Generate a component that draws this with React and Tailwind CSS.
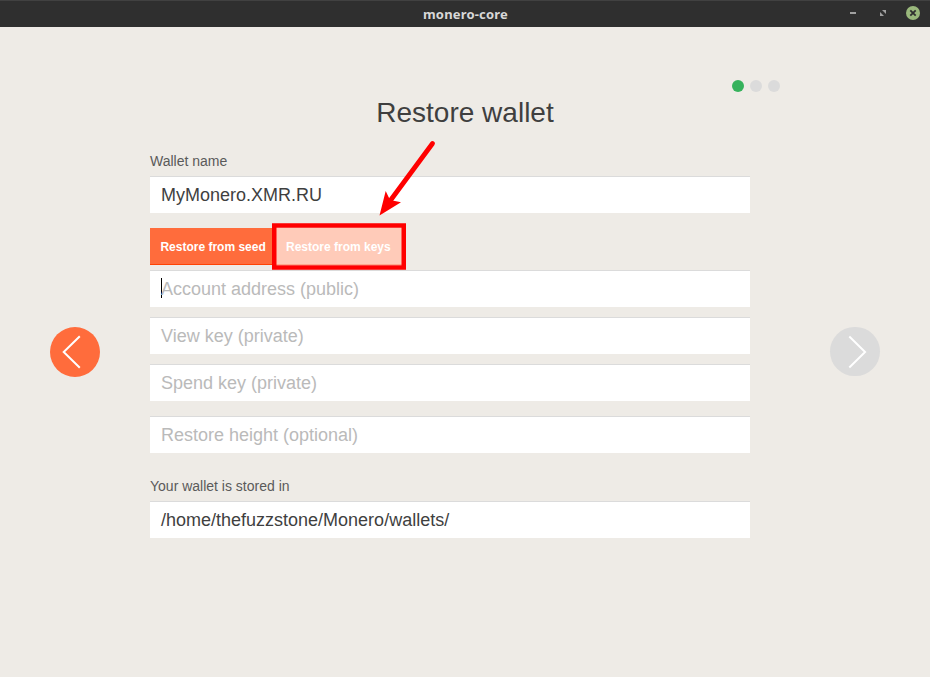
import React from "react";

function TitleBar() {
  return (
    <header className="grid h-[27px] grid-cols-[1fr_auto_1fr] items-start border-t border-[#414141] bg-[#2f2f2f]">
      <span />
      <h1 className="pt-1 pl-px font-['Noto_Sans',sans-serif] text-[13px] leading-[18px] font-bold tracking-[0.18px] text-[#d8d8d8]">
        monero-core
      </h1>
      <div className="flex items-center justify-end pt-1 pr-[10px]">
        <svg className="mr-[22px] h-2 w-2" viewBox="0 0 8 8" aria-hidden="true">
          <path d="M1 3h6v2H1z" fill="#a0a0a0" />
        </svg>
        <svg className="mr-[19px] h-2 w-2" viewBox="0 0 8 8" aria-hidden="true">
          <path d="M3 1H7V5zM1 3V7h4z" fill="#a0a0a0" />
        </svg>
        <svg className="h-4 w-[14px]" viewBox="0 0 14 16" aria-hidden="true">
          <circle cx="7" cy="8" r="7" fill="#9ab87c" />
          <path d="M4.3 5.3l5.4 5.4M9.7 5.3l-5.4 5.4" stroke="#2f2f2f" strokeWidth="1.8" />
        </svg>
      </div>
    </header>
  );
}

function Field({ value, placeholder, focused, className = "" }) {
  return (
    <div
      className={`flex h-[37px] items-center border-t border-[#dbdbdb] bg-white px-[11px] text-[18px] leading-[36px] ${className}`}
    >
      {focused && <span className="mr-[-1px] mb-[2px] h-5 w-px shrink-0 bg-black" />}
      {value ? (
        <span className="text-[#3f3f3f]">{value}</span>
      ) : (
        <span className="text-[#bababa]">{placeholder}</span>
      )}
    </div>
  );
}

function NavButton({ path, className }) {
  return (
    <button type="button" className={`w-[50px] shrink-0 rounded-full ${className}`}>
      <svg className="h-full w-full" viewBox="0 0 50 50" fill="none" aria-hidden="true">
        <path d={path} stroke="#fff" strokeWidth="2" />
      </svg>
    </button>
  );
}

export default function App() {
  return (
    <div className="relative h-[677px] w-[930px] overflow-hidden bg-[#eeebe6] font-['Liberation_Sans',Arial,sans-serif]">
      <TitleBar />
      <main className="flex px-[50px]">
        <NavButton
          className="mt-[300px] h-[50px] bg-[#ff6c3c]"
          path="M29.8 9.2L13.7 25L29.8 40.8"
        />

        <section className="mx-[50px] w-[630px]">
          <div className="flex justify-end gap-1.5 pt-[53px]">
            <span className="h-3 w-3 rounded-full bg-[#36b25c]" />
            <span className="h-3 w-3 rounded-full bg-[#dbdbdb]" />
            <span className="h-3 w-3 rounded-full bg-[#dbdbdb]" />
          </div>
          <h2 className="mt-[5px] text-center text-[28px] leading-8 text-[#3f3f3f]">
            Restore wallet
          </h2>

          <div className="mt-6 w-[600px]">
            <p className="h-[23px] text-[14px] leading-4 text-[#5a5a5a]">Wallet name</p>
            <Field value="MyMonero.XMR.RU" />

            <div className="mt-[15px] flex h-[37px] text-[12px] leading-[36px] font-bold text-white">
              <button
                type="button"
                className="w-[126px] border-b border-[#ff4304] bg-[#ff6c3c] pt-px pl-[10.4px] text-left"
              >
                Restore from seed
              </button>
              <button
                type="button"
                className="w-[126px] border-b border-[#ffa88c] bg-[#ffcbb9] pt-px pl-[10px] text-left"
              >
                Restore from keys
              </button>
            </div>

            <Field className="mt-[5px]" placeholder="Account address (public)" focused />
            <Field className="mt-[10px]" placeholder="View key (private)" />
            <Field className="mt-[10px]" placeholder="Spend key (private)" />
            <Field className="mt-[15px]" placeholder="Restore height (optional)" />

            <p className="mt-[25px] h-[23px] text-[14px] leading-4 text-[#5a5a5a]">
              Your wallet is stored in
            </p>
            <Field value="/home/thefuzzstone/Monero/wallets/" />
          </div>
        </section>

        <NavButton
          className="mt-[300px] h-[49px] bg-[#dbdbdb]"
          path="M19.2 9.7L35.3 25.5L19.2 41.3"
        />
      </main>

      {/* Annotation: arrow and frame around the "Restore from keys" tab */}
      <svg
        className="pointer-events-none absolute top-[135px] left-[265px] h-[140px] w-[180px]"
        viewBox="265 135 180 140"
        fill="none"
        aria-hidden="true"
      >
        <rect x="274.25" y="225.5" width="129.5" height="42" stroke="#f00" strokeWidth="4.5" />
        <path d="M432.5 143.5L390 201" stroke="#f00" strokeWidth="4.8" strokeLinecap="round" />
        <path d="M379.5 215.5L385.7 191L390 200L401 202.3Z" fill="#f00" />
      </svg>
    </div>
  );
}
